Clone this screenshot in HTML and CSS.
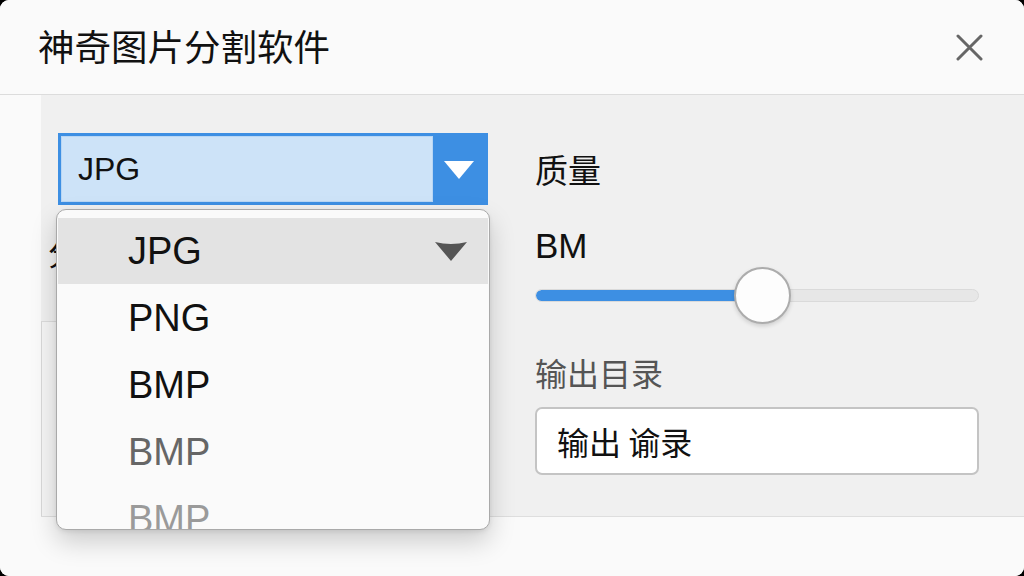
FILE: index.html
```html
<!DOCTYPE html>
<html lang="zh">
<head>
<meta charset="utf-8">
<title>神奇图片分割软件</title>
<link rel="stylesheet" href="styles.css">
</head>
<body>
<div class="window">
  <header class="titlebar">
    <h1 class="title">神奇图片分割软件</h1>
    <button class="close" aria-label="关闭">
      <svg width="27" height="27" viewBox="0 0 27 27"><path d="M2 2 L25 25 M25 2 L2 25" stroke="#666" stroke-width="3" stroke-linecap="round" fill="none"/></svg>
    </button>
  </header>
  <main class="content">
    <section class="col-left">
      <div class="select-wrap">
        <div class="select">
          <div class="select-field">JPG</div>
          <div class="select-btn">
            <svg width="32" height="20" viewBox="0 0 32 20"><path d="M1 1 L31 1 L16 19 Z" fill="#fff"/></svg>
          </div>
        </div>
        <ul class="menu">
          <li class="menu-item active"><span>JPG</span>
            <svg class="menu-caret" width="34" height="22" viewBox="0 0 34 22"><path d="M1 2 Q17 6 33 2 L17 21 Z" fill="#555"/></svg>
          </li>
          <li class="menu-item">PNG</li>
          <li class="menu-item">BMP</li>
          <li class="menu-item dim">BMP</li>
          <li class="menu-item faint">BMP</li>
        </ul>
      </div>
      <div class="hidden-label">分割方式</div>
      <div class="hidden-box"></div>
    </section>
    <section class="col-right">
      <div class="label strong">质量</div>
      <div class="label bm">BM</div>
      <div class="slider">
        <div class="track"><div class="fill" style="width:51%"></div></div>
        <div class="thumb" style="left:199px"></div>
      </div>
      <div class="label muted out-label">输出目录</div>
      <div class="input">输出 谕录</div>
    </section>
  </main>
  <footer class="footer"></footer>
</div>
</body>
</html>
```

FILE: styles.css
```css
* { box-sizing: border-box; }
html, body { margin: 0; padding: 0; }
body {
  background: #000;
  width: 1024px;
  height: 576px;
  overflow: hidden;
  font-family: "Liberation Sans", "Noto Sans CJK SC", sans-serif;
}
.window {
  width: 1024px;
  height: 576px;
  background: #fafafa;
  border-radius: 9px;
  overflow: hidden;
  display: flex;
  flex-direction: column;
}
.titlebar {
  height: 95px;
  flex: none;
  display: flex;
  align-items: center;
  justify-content: space-between;
  padding: 0 41px 0 38px;
  border-bottom: 1px solid #dcdcdc;
  background: #fafafa;
}
.title {
  margin: 0;
  font-family: "Noto Sans CJK SC", sans-serif;
  font-size: 36.5px;
  font-weight: 400;
  color: #111;
  line-height: 1;
  padding-bottom: 2px;
}
.close {
  border: 0;
  background: none;
  padding: 0;
  width: 27px;
  height: 27px;
  display: flex;
}
.content {
  height: 422px;
  flex: none;
  margin-left: 41px;
  background: #f0f0f0;
  border-bottom: 1px solid #dedede;
  display: flex;
  gap: 47px;
  padding-left: 17px;
}
.col-left {
  width: 430px;
  flex: none;
  display: flex;
  flex-direction: column;
  padding-top: 38px;
}
.select-wrap { position: relative; z-index: 2; }
.select {
  height: 72px;
  display: flex;
  border: 3px solid #3d8fe3;
  background: #3d8fe3;
}
.select-field {
  flex: 1;
  background: #cde3f8;
  border: 1px solid #b8d6f4;
  display: flex;
  align-items: center;
  padding-left: 16px;
  font-size: 32px;
  color: #111;
}
.select-btn {
  width: 52px;
  display: flex;
  align-items: center;
  justify-content: center;
  padding-top: 2px;
}
.menu {
  position: absolute;
  top: 76px;
  left: -2px;
  width: 434px;
  height: 321px;
  margin: 0;
  padding: 8px 0 0;
  list-style: none;
  background: #fafafa;
  border: 1px solid #a9a9a9;
  border-radius: 10px;
  box-shadow: 0 12px 26px rgba(0, 0, 0, 0.18), 0 2px 4px rgba(0, 0, 0, 0.08);
  overflow: hidden;
}
.menu-item {
  height: 67px;
  display: flex;
  align-items: center;
  justify-content: space-between;
  padding: 0 20px 0 71px;
  font-size: 38px;
  color: #111;
}
.menu-item.active { background: #e3e3e3; height: 66px; margin: 0 1px 1px; padding-left: 70px; }
.menu-item.dim { color: #666; }
.menu-item.faint { color: #9a9a9a; }
.menu-caret { flex: none; }
.hidden-label {
  margin-left: -10px;
  margin-top: 26px;
  height: 40px;
  line-height: 40px;
  font-family: "Noto Sans CJK SC", sans-serif;
  font-size: 32px;
  color: #111;
}
.hidden-box {
  margin-left: -17px;
  margin-top: 50px;
  flex: 1;
  background: #f5f5f5;
  border-left: 1px solid #d8d8d8;
  border-top: 1px solid #dcdcdc;
}
.col-right {
  width: 444px;
  flex: none;
  display: flex;
  flex-direction: column;
  padding-top: 54px;
}
.label {
  height: 40px;
  line-height: 40px;
  font-size: 32px;
  color: #111;
}
.strong { font-family: "Noto Sans CJK SC", sans-serif; font-size: 33px; }
.bm { margin-top: 37px; font-size: 35px; }
.slider {
  position: relative;
  height: 57px;
  margin-top: 1px;
  display: flex;
  align-items: center;
}
.track {
  width: 100%;
  height: 13px;
  border-radius: 7px;
  background: #e7e7e7;
  border: 1px solid #dadada;
  overflow: hidden;
}
.fill {
  height: 100%;
  background: #3d8fe3;
  border-radius: 7px 0 0 7px;
}
.thumb {
  position: absolute;
  top: 0;
  width: 57px;
  height: 57px;
  border-radius: 50%;
  background: #fdfdfd;
  border: 2px solid #acacac;
  box-shadow: 0 2px 4px rgba(0, 0, 0, 0.15);
}
.muted { color: #555; font-family: "Noto Sans CJK SC", sans-serif; }
.out-label { margin-top: 28px; }
.input {
  margin-top: 15px;
  height: 68px;
  background: #fff;
  border: 2px solid #c4c4c4;
  border-radius: 7px;
  display: flex;
  align-items: center;
  padding-left: 20px;
  font-family: "Noto Sans CJK SC", sans-serif;
  font-size: 32px;
  color: #111;
}
.footer { flex: 1; background: #fafafa; }
```
